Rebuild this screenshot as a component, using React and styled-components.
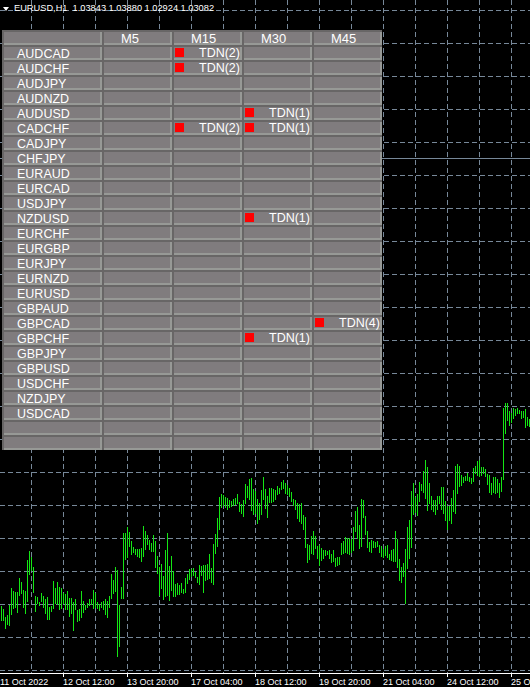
import React from "react";
import styled, { createGlobalStyle } from "styled-components";

const GlobalStyle = createGlobalStyle`
  html, body { margin: 0; padding: 0; background: #000; }
  body { width: 530px; height: 687px; overflow: hidden; font-family: "Liberation Sans", Arial, sans-serif; }
`;

const Screen = styled.div`
  width: 530px;
  height: 687px;
  background: #000;
  display: flex;
  flex-direction: column;
  overflow: hidden;
`;

const ChartArea = styled.div`
  position: relative;
  width: 530px;
  height: 673px;
  flex: none;
`;

const ChartSvg = styled.svg`
  display: block;
`;

const Legend = styled.div`
  position: absolute;
  left: 3px;
  top: 2px;
  display: flex;
  align-items: center;
  gap: 5px;
  color: #fff;
  font-size: 9.25px;
  line-height: 12px;
  white-space: pre;
`;

const LegendArrow = styled.span`
  width: 0;
  height: 0;
  border-left: 3px solid transparent;
  border-right: 3px solid transparent;
  border-top: 4px solid #fff;
  margin-top: 2px;
`;

const Panel = styled.div`
  position: absolute;
  left: 2px;
  top: 30px;
  width: 380px;
  height: 420px;
  box-sizing: border-box;
  padding: 2px 0 0 2px;
  background: #686666;
  display: grid;
  grid-template-columns: 98px repeat(4, 68px);
  grid-auto-rows: 13px;
  gap: 2px;
  color: #fff;
  font-size: 12.5px;
`;

const Cell = styled.div`
  box-sizing: border-box;
  height: 13px;
  background: #807c7e;
  border-right: 2px solid #979996;
  border-bottom: 2px solid #979996;
  display: flex;
  align-items: flex-start;
  white-space: nowrap;
`;

const HeaderCell = styled(Cell)`
  padding-left: 17px;
  font-size: 13px;
  line-height: 13px;
`;

const SymbolCell = styled(Cell)`
  padding-left: 13px;
  line-height: 14px;
  overflow: visible;
`;

const Marker = styled.span`
  flex: none;
  width: 9px;
  height: 9px;
  margin: 1px 0 0 1px;
  background: #ff0000;
`;

const SignalText = styled.span`
  margin-left: 15px;
  line-height: 12px;
`;

const Axis = styled.div`
  flex: none;
  height: 14px;
  box-sizing: border-box;
  border-top: 1px solid #fff;
  display: flex;
  color: #fff;
  font-size: 9px;
  line-height: 13px;
  white-space: nowrap;
`;

const AxisLabel = styled.span`
  flex: none;
  box-sizing: border-box;
  width: ${(p) => p.$width}px;
  padding-top: 2px;
  overflow: hidden;
  background: ${(p) => (p.$tick ? "linear-gradient(#fff, #fff) 0 0 / 1px 3px no-repeat" : "none")};
`;

const seg1 = [408,452,417,452,441,476,435,465,405,468,354,435,363,417,366,414,366,429,324,378,336,372,360,414,363,432,270,396,243,315,261,303,291,369,378,426,381,402,396,408,369,396,378,414,387,432,381,450,411,450,408,426,333,417,354,402,336,405,351,420,354,417,369,402,372,420,363,420,384,441,384,432,396,483,387,420,420,456,417,453,363,444,393,429,405,420,399,414,387,408,387,405,360,417,369,414,396,417,402,423,396,414,393,420,387,435,393,444,378,414,312,387,330,372,291,366,300,561,405,531,351,387,189,387,189,270,171,264,186,231];
const seg2 = [213,255,231,249,237,255,237,261,237,264,234,276,168,261,183,240,195,225,210,240,219,246,195,246,213,294,258,312,291,378,282,357,318,390,240,381,189,378,288,393,258,363,303,381,342,381,339,375,345,375,339,369,357,372,324,369,312,342,297,330,297,321,294,318,306,324,321,339,285,345,288,318,285,369,285,333,282,330,252,327,294,339,222,345,192,252,144,231,81,180,72,114,75,108,81,114,84,120,90,114,93,111,87,108,84,105,72,102,96,126,102,132,90,141,42,102,48,84,27,90,24,123,57,135,63,132,87,162,99,150];
const seg3 = [60,135,21,90,57,117,78,144,54,99,54,99,57,96,60,90,48,75,54,72,36,60,30,57,39,72,45,75,54,81,66,96,87,108,90,120,99,147,102,156,99,162,135,180,141,234,222,279,225,270,198,252,183,255,198,237,228,267,225,288,234,273,240,267,240,258,243,255,240,267,252,279,240,276,264,291,261,288,261,285,219,255,213,252,201,249,204,252,204,255,207,249,171,243,123,186,111,207,165,237,87,231,90,144,138,195,183,234,216,246,210,249,213,234,216,234,213,231,225,249,228,261,237,264,228,258,225,264,252,270];
const seg4 = [450,483,447,486,393,486,417,504,477,543,501,549,489,531,447,612,381,507,360,477,273,444,249,345,291,339,282,348,246,306,252,273,213,279,180,297,201,333,249,312,288,330,300,336,300,345,288,330,288,312,261,330,261,342,303,363,318,390,318,363,294,372,270,336,198,342,192,282,198,261,225,258,231,249,228,243,219,243,231,246,234,252,204,246,198,222,183,228,180,231,201,228,201,222,207,231,222,255,225,279,249,285,231,279,231,282,237,279,249,294,231,276,24,240,9,102,9,63,33,78,39,69,24,57,27,48,24,42,30,42,33,57,33,54,27,84,51,78,57,81];

function segPath(values, startX, y0) {
  let d = "";
  for (let i = 0; i < values.length; i += 2) {
    const x = startX + i + 0.5;
    const top = Math.round(y0 + values[i] / 3);
    const bottom = Math.round(y0 + values[i + 1] / 3);
    d += `M${x} ${top}V${bottom}`;
  }
  return d;
}

const barsPath =
  segPath(seg1, 1, 470) + segPath(seg2, 131, 470) + segPath(seg3, 261, 470) + segPath(seg4, 391, 400);

const verticals = Array.from({ length: 16 }, (_, i) => 31 + i * 32);
const horizontals = Array.from({ length: 21 }, (_, i) => 10 + i * 33);

const symbols = [
  "AUDCAD","AUDCHF","AUDJPY","AUDNZD","AUDUSD","CADCHF","CADJPY","CHFJPY","EURAUD","EURCAD",
  "USDJPY","NZDUSD","EURCHF","EURGBP","EURJPY","EURNZD","EURUSD","GBPAUD","GBPCAD","GBPCHF",
  "GBPJPY","GBPUSD","USDCHF","NZDJPY","USDCAD","","",
];
const frames = ["M5", "M15", "M30", "M45"];
const signals = {
  AUDCAD: { M15: 2 },
  AUDCHF: { M15: 2 },
  AUDUSD: { M30: 1 },
  CADCHF: { M15: 2, M30: 1 },
  NZDUSD: { M30: 1 },
  GBPCAD: { M45: 4 },
  GBPCHF: { M30: 1 },
};
const axisLabels = [
  "11 Oct 2022","12 Oct 12:00","13 Oct 20:00","17 Oct 04:00","18 Oct 12:00",
  "19 Oct 20:00","21 Oct 04:00","24 Oct 12:00","25 Oct 20:00",
];

export default function App() {
  return (
    <Screen>
      <GlobalStyle />
      <ChartArea>
        <ChartSvg width="530" height="673" viewBox="0 0 530 673" shapeRendering="crispEdges">
          <g stroke="#778899" strokeWidth="1" strokeDasharray="5 3" fill="none">
            {horizontals.map((y) => (
              <line key={y} x1="0" x2="530" y1={y + 0.5} y2={y + 0.5} />
            ))}
            {verticals.map((x) => (
              <line key={x} x1={x + 0.5} x2={x + 0.5} y1="0" y2="673" />
            ))}
          </g>
          <line x1="0" x2="530" y1="158.5" y2="158.5" stroke="#778899" strokeWidth="1" />
          <path d={barsPath} stroke="#14e614" strokeWidth="1" fill="none" />
        </ChartSvg>
        <Legend>
          <LegendArrow />
          <span>{"EURUSD,H1  1.03843 1.03880 1.02924 1.03082"}</span>
        </Legend>
        <Panel>
          <HeaderCell />
          {frames.map((f) => (
            <HeaderCell key={f}>{f}</HeaderCell>
          ))}
          {symbols.map((symbol, r) => (
            <React.Fragment key={r}>
              <SymbolCell>{symbol}</SymbolCell>
              {frames.map((f) => {
                const count = signals[symbol]?.[f];
                return (
                  <Cell key={f}>
                    {count ? (
                      <>
                        <Marker />
                        <SignalText>{`TDN(${count})`}</SignalText>
                      </>
                    ) : null}
                  </Cell>
                );
              })}
            </React.Fragment>
          ))}
        </Panel>
      </ChartArea>
      <Axis>
        {axisLabels.map((label, i) => (
          <AxisLabel key={label} $width={i === 0 ? 63 : 64} $tick={i > 0}>
            {label}
          </AxisLabel>
        ))}
      </Axis>
    </Screen>
  );
}
